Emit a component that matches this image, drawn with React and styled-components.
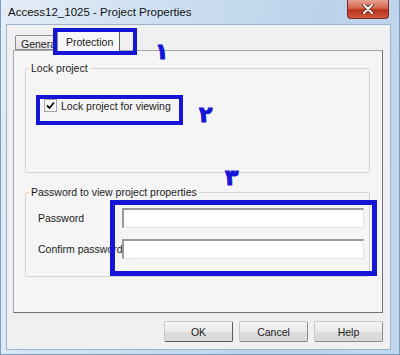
import styled, { createGlobalStyle } from "styled-components"

const GlobalStyle = createGlobalStyle`
    html, body {
        margin: 0;
        padding: 0;
    }
    body {
        width: 400px;
        height: 355px;
        overflow: hidden;
        font-family: "Liberation Sans", Arial, sans-serif;
        font-size: 10px;
        color: #1b1b1b;
    }
`

const Window = styled.div`
    position: relative;
    width: 400px;
    height: 355px;
    box-sizing: border-box;
    display: flex;
    flex-direction: column;
    padding: 0 10px 6px 7px;
    background: linear-gradient(100deg, #e4edf7 0%, #cddff1 35%, #bcd2ea 70%, #c2d7ee 100%);
    box-shadow: inset 1px 0 0 #7d9cc0, inset -1px 0 0 #7d9cc0, inset 0 -1px 0 #7d9cc0;
`

const TitleBar = styled.div`
    height: 25px;
    display: flex;
    justify-content: space-between;
    align-items: flex-start;
`

const Title = styled.span`
    padding: 6px 0 0 1px;
    font-size: 11.5px;
    color: #111;
`

const CloseButton = styled.div`
    width: 42px;
    height: 19px;
    margin-right: 1px;
    display: flex;
    align-items: center;
    justify-content: center;
    box-sizing: border-box;
    border: 1px solid #7a2a22;
    border-top: none;
    border-radius: 0 0 4px 4px;
    background: linear-gradient(180deg, #e8a193 0%, #d2664f 45%, #b8301c 55%, #cf5a3d 100%);
`

const Client = styled.div`
    flex: 1;
    display: flex;
    flex-direction: column;
    padding: 6px 7px 7px 6px;
    background: #f0f0f0;
    box-shadow: 0 0 0 1px #9fb3cc;
`

const TabRow = styled.div`
    display: flex;
    align-items: flex-end;
    height: 19px;
    padding-left: 2px;
    position: relative;
    z-index: 1;
`

const Tab = styled.div`
    box-sizing: border-box;
    height: ${p => (p.$active ? "20px" : "15px")};
    margin-bottom: ${p => (p.$active ? "-1px" : "0")};
    margin-left: ${p => (p.$active ? "-2px" : "0")};
    padding: ${p => (p.$active ? "4px 9px 0 8px" : "2px 0 0 5px")};
    width: ${p => p.$width}px;
    overflow: hidden;
    white-space: nowrap;
    background: ${p => (p.$active ? "#f7f7f7" : "linear-gradient(180deg, #f2f2f2, #e3e3e3)")};
    border: 1px solid #8c8e94;
    border-bottom: ${p => (p.$active ? "none" : "1px solid #8c8e94")};
    border-right-color: ${p => (p.$active ? "#5e5e5e" : "#8c8e94")};
    border-radius: 2px 2px 0 0;
    font-size: 10.5px;
`

const Panel = styled.div`
    flex: 1;
    display: flex;
    flex-direction: column;
    gap: 13px;
    padding: 11px 12px 0 11px;
    background: #f5f5f5;
    border: 1px solid #a3a5aa;
    border-right-color: #6f7176;
    border-bottom-color: #6f7176;
`

const Group = styled.fieldset`
    margin: 0;
    min-width: 0;
    box-sizing: border-box;
    height: ${p => p.$height}px;
    padding: 0;
    border: 1px solid #d0d4d8;
    border-radius: 2px;
`

const Legend = styled.legend`
    padding: 0 2px;
    margin-left: 3px;
    font-size: 10.5px;
    line-height: 12px;
`

const GroupBody = styled.div`
    padding: ${p => p.$pad};
`

const CheckRow = styled.label`
    display: flex;
    align-items: center;
    gap: 4px;
    font-size: 10.5px;
`

const CheckBox = styled.span`
    width: 11px;
    height: 11px;
    display: flex;
    align-items: center;
    justify-content: center;
    border: 1px solid #a6a6a6;
    background: #f7f7f7;
`

const FieldGrid = styled.div`
    display: grid;
    grid-template-columns: 84px 242px;
    row-gap: 11px;
    align-items: center;
`

const FieldLabel = styled.span`
    font-size: 10.5px;
    white-space: nowrap;
`

const TextBox = styled.div`
    height: 20px;
    box-sizing: border-box;
    background: #fff;
    border: 1px solid #e4e4e4;
    border-top: 2px solid #9a9a9a;
    border-left: 2px solid #9a9a9a;
`

const ButtonRow = styled.div`
    display: flex;
    justify-content: flex-end;
    gap: 6px;
    margin-top: 8px;
`

const Button = styled.div`
    width: 69px;
    height: 21px;
    box-sizing: border-box;
    display: flex;
    align-items: center;
    justify-content: center;
    font-size: 10.5px;
    background: linear-gradient(180deg, #f4f4f4 0%, #ebebeb 50%, #dedede 51%, #d8d8d8 100%);
    border: 1px solid ${p => (p.$default ? "#5a5a5a" : "#8a8a8a")};
    border-top-color: #c9c9c9;
    border-left-color: #c9c9c9;
    border-radius: 2px;
`

const Marker = styled.div`
    position: absolute;
    left: ${p => p.$x}px;
    top: ${p => p.$y}px;
    width: ${p => p.$w}px;
    height: ${p => p.$h}px;
    box-sizing: border-box;
    border: ${p => p.$t}px solid #1515d8;
    z-index: 5;
`

const Digit = styled.span`
    position: absolute;
    left: ${p => p.$x}px;
    top: ${p => p.$y}px;
    font-family: "DejaVu Sans", sans-serif;
    font-weight: bold;
    font-size: 22px;
    line-height: 1;
    color: #1515d8;
    -webkit-text-stroke: 1px #1515d8;
    z-index: 5;
`

const App = () => {
    return (
        <>
            <GlobalStyle />
            <Window>
                <TitleBar>
                    <Title>Access12_1025 - Project Properties</Title>
                    <CloseButton>
                        <svg width="12" height="10" viewBox="0 0 12 10">
                            <path d="M2 1 L10 9 M10 1 L2 9" stroke="#5a1a12" strokeWidth="3.6" strokeLinecap="round" />
                            <path d="M2 1 L10 9 M10 1 L2 9" stroke="#fff" strokeWidth="2" strokeLinecap="round" />
                        </svg>
                    </CloseButton>
                </TitleBar>
                <Client>
                    <TabRow>
                        <Tab $width={44}>General</Tab>
                        <Tab $active $width={63}>Protection</Tab>
                    </TabRow>
                    <Panel>
                        <Group $height={111}>
                            <Legend>Lock project</Legend>
                            <GroupBody $pad="25px 0 0 18px">
                                <CheckRow>
                                    <CheckBox>
                                        <svg width="9" height="9" viewBox="0 0 9 9">
                                            <path d="M1 4.5 L3.5 7 L8 1.5" stroke="#111" strokeWidth="1.8" fill="none" />
                                        </svg>
                                    </CheckBox>
                                    Lock project for viewing
                                </CheckRow>
                            </GroupBody>
                        </Group>
                        <Group $height={91}>
                            <Legend>Password to view project properties</Legend>
                            <GroupBody $pad="10px 0 0 12px">
                                <FieldGrid>
                                    <FieldLabel>Password</FieldLabel>
                                    <TextBox />
                                    <FieldLabel>Confirm password</FieldLabel>
                                    <TextBox />
                                </FieldGrid>
                            </GroupBody>
                        </Group>
                    </Panel>
                    <ButtonRow>
                        <Button $default>OK</Button>
                        <Button>Cancel</Button>
                        <Button>Help</Button>
                    </ButtonRow>
                </Client>
                <Marker $x={53} $y={28} $w={84} $h={27} $t={4} />
                <Marker $x={36} $y={95} $w={147} $h={30} $t={4} />
                <Marker $x={110} $y={200} $w={267} $h={76} $t={5} />
                <Digit $x={155} $y={41}>١</Digit>
                <Digit $x={199} $y={104}>٢</Digit>
                <Digit $x={225} $y={167}>٣</Digit>
            </Window>
        </>
    )
}

export default App
